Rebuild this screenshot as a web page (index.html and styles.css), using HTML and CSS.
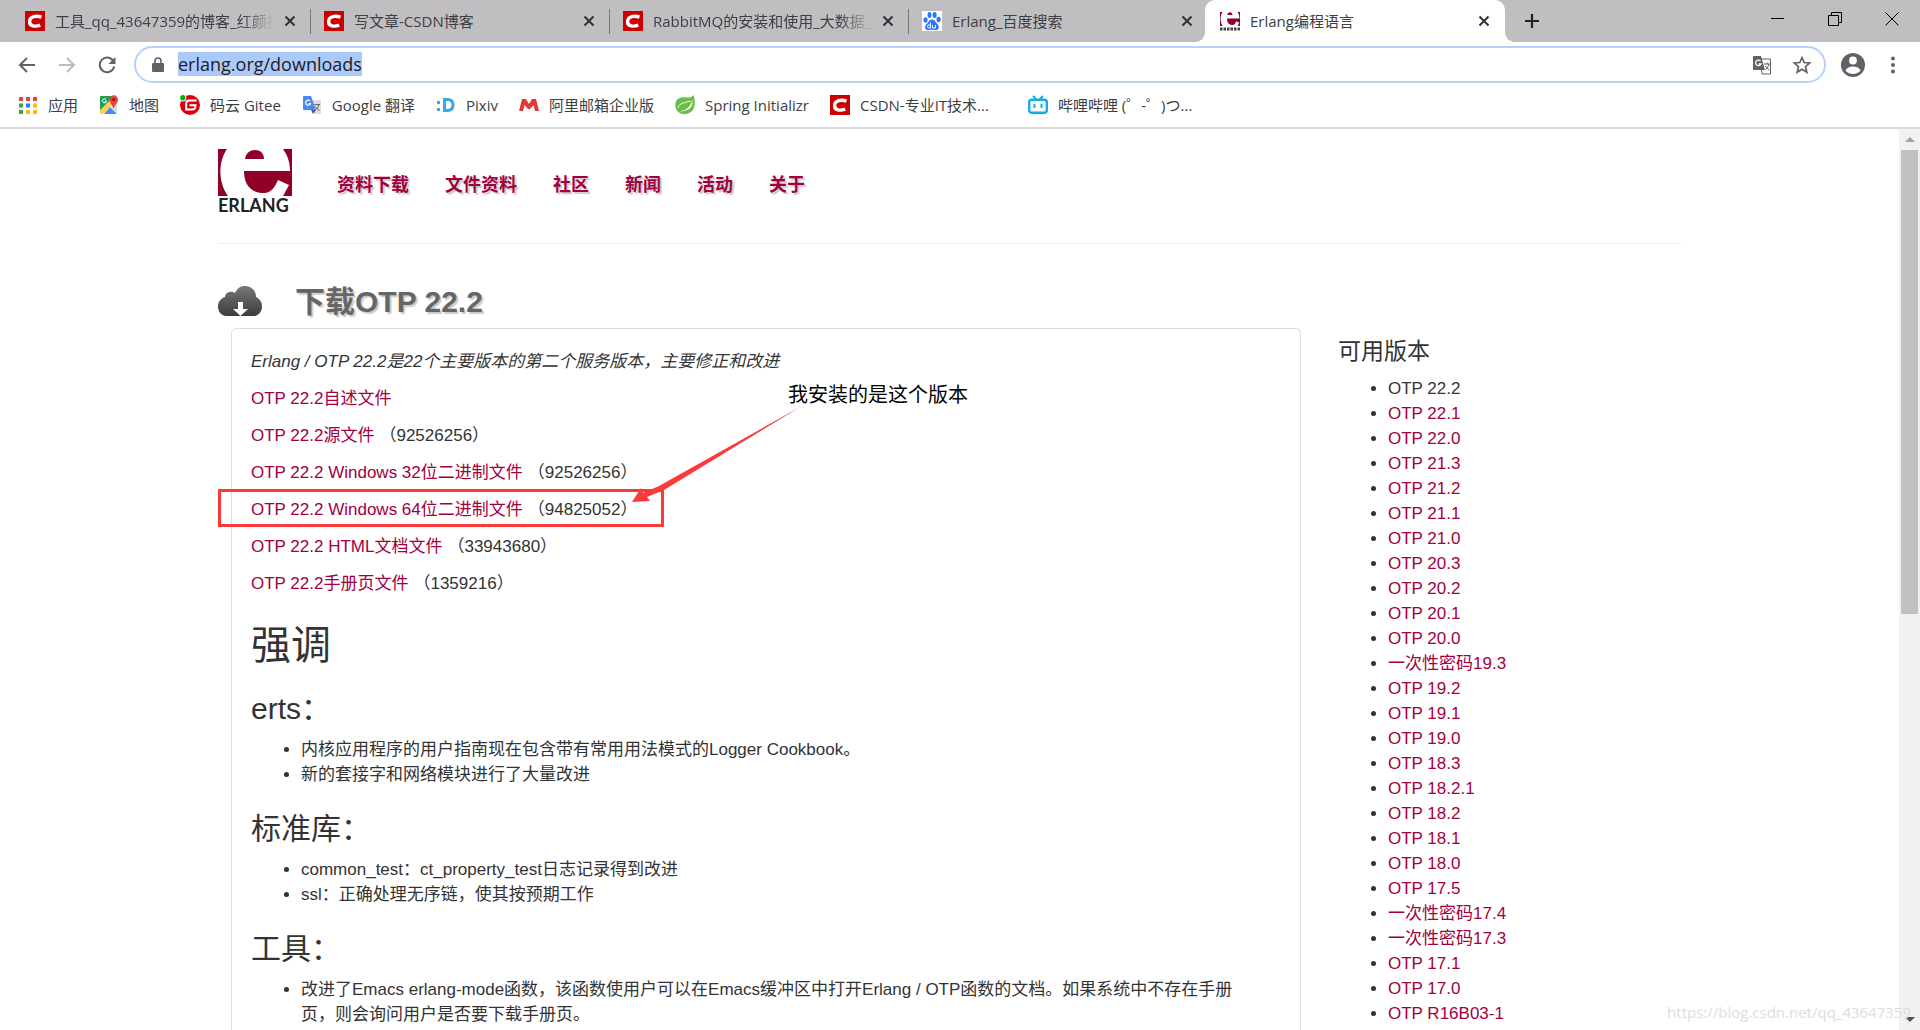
FILE: index.html
```html
<!DOCTYPE html>
<html lang="zh-CN">
<head>
<meta charset="utf-8">
<title>Erlang编程语言</title>
<link rel="stylesheet" href="styles.css">
</head>
<body>
<svg class="defs" aria-hidden="true">
  <symbol id="csdn" viewBox="0 0 20 20"><path fill="#c00" d="M0 0h20v20H0z"/><path fill="none" stroke="#fff" stroke-width="3.4" d="M16.5 6.2C12 4.600 4.800 4.800 4.600 10.500c-.2 4.800 5.800 5.500 10.600 3.600"/></symbol>
  <symbol id="erl" viewBox="0 0 74 47"><path fill="#900028" d="M0 0h9C0 13 0 33 10 47H0zM65 0h9v47H65l6-11-11-5c-3 7-7 13-14 13-13 0-20-8-20-22h46C72 14 70 7 65 0zM27 10c1-6 5-9 10-9s9 3 9 9z"/></symbol>
  <symbol id="close" viewBox="0 0 12 12"><path d="M1.500 1.500l9 9m0-9l-9 9" stroke="#303236" stroke-width="2" fill="none"/></symbol>
</svg>

<header class="browser">
  <div class="tabbar">
    <div class="tab"><svg class="fav"><use href="#csdn"/></svg><span class="tab-title fade">工具_qq_43647359的博客_红颜祸</span><button class="close" aria-label="关闭"><svg><use href="#close"/></svg></button></div>
    <div class="tab"><svg class="fav"><use href="#csdn"/></svg><span class="tab-title">写文章-CSDN博客</span><button class="close" aria-label="关闭"><svg><use href="#close"/></svg></button></div>
    <div class="tab"><svg class="fav"><use href="#csdn"/></svg><span class="tab-title fade">RabbitMQ的安装和使用_大数据_</span><button class="close" aria-label="关闭"><svg><use href="#close"/></svg></button></div>
    <div class="tab last"><svg class="fav" viewBox="0 0 20 20"><path fill="#fff" d="M0 0h20v20H0z"/><g fill="#2878ff"><ellipse cx="3.500" cy="9" rx="2.100" ry="2.700"/><ellipse cx="7.500" cy="4" rx="2" ry="2.900"/><ellipse cx="12.600" cy="4" rx="2" ry="2.900"/><ellipse cx="16.600" cy="8.500" rx="2.100" ry="2.700"/><path d="M10 8.500c3 0 3.500 3 5.500 4.800 2.500 2.300 1.300 6-1.700 5.900-1.500 0-2.200-.4-3.800-.4s-2.500.4-4 .4c-3 0-3.900-3.600-1.600-5.900C6.500 11.500 7 8.500 10 8.500z"/></g><path fill="none" stroke="#fff" d="M8.500 11.500v5.500H7a1.500 1.500 0 0 1 0-3h1.500M10.500 14v3h3v-3"/></svg><span class="tab-title">Erlang_百度搜索</span><button class="close" aria-label="关闭"><svg><use href="#close"/></svg></button></div>
    <div class="tab active"><svg class="fav" viewBox="0 0 20 20"><svg width="20" height="14" y="1" viewBox="0 0 74 47" preserveAspectRatio="none"><use href="#erl" width="74" height="47"/></svg><path stroke="#444" stroke-width="3" stroke-dasharray="2.500 1" d="M0 18h20"/></svg><span class="tab-title">Erlang编程语言</span><button class="close" aria-label="关闭"><svg><use href="#close"/></svg></button></div>
    <button class="newtab" aria-label="新标签页"><svg viewBox="0 0 16 16"><path d="M8 1v14M1 8h14" stroke="#222" stroke-width="2.200"/></svg></button>
    <div class="window-buttons">
      <button aria-label="最小化"><svg viewBox="0 0 14 14"><path d="M0 6.500h13" stroke="#000"/></svg></button>
      <button aria-label="还原"><svg viewBox="0 0 14 14"><path d="M.5 3.500h10v10H.5zM3.500 3V.5h10v10H11" stroke="#000" fill="none"/></svg></button>
      <button aria-label="关闭窗口"><svg viewBox="0 0 14 14"><path d="M.5.5l13 13m0-13l-13 13" stroke="#000"/></svg></button>
    </div>
  </div>
  <div class="toolbar">
    <button class="tool" aria-label="后退"><svg viewBox="0 0 18 18"><path d="M17 9H2m7-7L2 9l7 7" fill="none" stroke="#5f6368" stroke-width="2"/></svg></button>
    <button class="tool" aria-label="前进"><svg viewBox="0 0 18 18"><path d="M1 9h15M9 2l7 7-7 7" fill="none" stroke="#babcbe" stroke-width="2"/></svg></button>
    <button class="tool" aria-label="重新加载"><svg viewBox="0 0 18 18"><path d="M15.300 5A7.300 7.300 0 1 0 16.200 10.500" fill="none" stroke="#5f6368" stroke-width="2"/><path d="M17.500 1v7h-7z" fill="#5f6368"/></svg></button>
    <div class="omnibox">
      <svg class="lock" viewBox="0 0 12 16"><path d="M1 6h10q1 0 1 1v7q0 1-1 1H1q-1 0-1-1V7q0-1 1-1z" fill="#5f6368"/><path d="M3 7V4a3 3 0 0 1 6 0v3" fill="none" stroke="#5f6368" stroke-width="1.600"/></svg>
      <a class="url" href="#"><mark>erlang.org/downloads</mark></a>
      <button class="inner" aria-label="翻译此页"><svg viewBox="0 0 20 20"><path d="M8 4h10.500v15H10z" fill="#fff" stroke="#5f6368"/><path d="M2 1h7l4 14H2q-1 0-1-1V2q0-1 1-1z" fill="#5f6368"/><path d="M8.500 6A2.800 2.800 0 1 0 9 9H6.500" fill="none" stroke="#fff" stroke-width="1.300"/><path d="M12 9h6m-3-1.500V9m2 0q-1 4-3.500 5.500M13.500 11q1.500 3 4 4" fill="none" stroke="#5f6368"/></svg></button>
      <button class="inner" aria-label="收藏"><svg viewBox="0 0 20 20"><path d="M10 2.500l2.200 5 5.500.5-4.200 3.700 1.300 5.400-4.800-2.900-4.800 2.900 1.300-5.400L2.300 8l5.500-.5z" fill="none" stroke="#5f6368" stroke-width="1.700"/></svg></button>
    </div>
    <button class="tool profile" aria-label="用户"><svg viewBox="0 0 24 24"><circle cx="12" cy="12" r="12" fill="#5f6368"/><circle cx="12" cy="7.500" r="3.900" fill="#fff"/><path d="M4.500 17.500c2-5.500 13-5.500 15 0-3.500 4.600-11.500 4.600-15 0z" fill="#fff"/></svg></button>
    <button class="tool menu" aria-label="菜单"><svg viewBox="0 0 18 18"><g fill="#5f6368"><circle cx="9" cy="2.500" r="2"/><circle cx="9" cy="9" r="2"/><circle cx="9" cy="15.500" r="2"/></g></svg></button>
  </div>
  <nav class="bookmarks">
    <a href="#"><svg viewBox="0 0 20 20"><path fill="#e8453c" d="M1 2h4v4H1zM8 2h4v4H8zM15 2h4v4h-4z"/><path fill="#34a853" d="M1 8.500h4v4H1zM1 15h4v4H1z"/><path fill="#2e7cf6" d="M8 8.500h4v4H8z"/><path fill="#fbbc05" d="M15 8.500h4v4h-4zM8 15h4v4H8zM15 15h4v4h-4z"/></svg>应用</a>
    <a href="#"><svg viewBox="0 0 20 20"><path fill="#1e9e5a" d="M2 1h13L1 16V2q0-1 1-1z"/><path fill="#ffd04b" d="M1 15L14 3l3 3L4 19H2q-1 0-1-1z"/><path fill="#4a89f3" d="M5 19l6-7 7 7z"/><path fill="#d8d8d8" d="M11 11l4-4 3 4v7z"/><path fill="#e8453c" d="M14.500 14C14 10 10.500 9 10.500 4.500a4 4 0 0 1 8.500 0c0 4.500-4 5.500-4.500 9.500z"/><circle cx="14.700" cy="4.500" r="1.500" fill="#801c15"/><path d="M7 4.500A2 2 0 1 0 7.500 6H5.800" fill="none" stroke="#fff"/></svg>地图</a>
    <a href="#"><svg viewBox="0 0 20 20"><circle cx="10" cy="10" r="10" fill="#d9000f"/><circle cx="2.800" cy="2.800" r="3.600" fill="#fff"/><circle cx="2.800" cy="2.800" r="2.700" fill="#0aae12"/><path d="M16.500 5.500H9.500Q6.200 5.500 6.200 8.500v6h6q3.300 0 3.300-4.200H9.500" fill="none" stroke="#fff" stroke-width="2"/></svg>码云 Gitee</a>
    <a href="#"><svg viewBox="0 0 20 20"><path fill="#ddd" d="M8 5h10q1 0 1 1v12q0 1-1 1h-6z"/><path fill="#4a89f3" d="M2 1h7l5 14H2q-1 0-1-1V2q0-1 1-1z"/><path fill="#3059b8" d="M9 15h5l-3 4z"/><path d="M8 6A2.500 2.500 0 1 0 8.500 8.500H6.500" fill="none" stroke="#fff" stroke-width="1.200"/><path d="M12.500 9.500H18m-1 0q-1 4-3 5m-.5-3q1.500 3 4 4" fill="none" stroke="#666"/></svg>Google 翻译</a>
    <a href="#"><svg viewBox="0 0 20 20"><path fill="#35a8e8" d="M1 6h3v3H1zM1 13h3v3H1z"/><path fill="none" stroke="#35a8e8" stroke-width="3" d="M8.500 4.500h3q5.500 0 5.500 5.500t-5.500 5.500h-3z"/></svg>Pixiv</a>
    <a href="#"><svg viewBox="0 0 20 20"><path fill="#e03a34" d="M0 16L3 4h4l3 5 3-5h4l3 12h-4l-1.500-6L11 14H9L5.500 10 4 16z"/></svg>阿里邮箱企业版</a>
    <a href="#"><svg viewBox="0 0 20 20"><path fill="#68bd45" d="M18.500 0c3 9 1 18-7.500 19-5 .8-10-2-10.600-8C-.3 4 5 1.500 12 2.500c3 .2 5-.5 6.500-2.500z"/><path fill="#fff" d="M17.500 5c.5 8-4 11-13 11.500C12 15 15 12 17.500 5z"/><path d="M3 13C4 8 10 7.500 16 6" stroke="#fff" fill="none"/></svg>Spring Initializr</a>
    <a class="truncated" href="#"><svg><use href="#csdn"/></svg>CSDN-专业IT技术...</a>
    <a href="#"><svg viewBox="0 0 20 20"><path d="M5 1l3 3m7-3l-3 3" stroke="#12aee5" stroke-width="2"/><rect x="1.200" y="4.700" width="17.600" height="13" rx="2.500" fill="none" stroke="#12aee5" stroke-width="2.400"/><path d="M6.500 9v4m7-4v4" stroke="#12aee5" stroke-width="2"/></svg>哔哩哔哩 (゜-゜)つ...</a>
  </nav>
</header>

<div class="viewport">
  <div class="page">
    <div class="container">
      <header class="site-header">
        <a class="logo" href="#" aria-label="Erlang"><svg viewBox="0 0 74 47"><use href="#erl"/></svg><span>ERLANG</span></a>
        <nav class="site-nav"><a href="#">资料下载</a><a href="#">文件资料</a><a href="#">社区</a><a href="#">新闻</a><a href="#">活动</a><a href="#">关于</a></nav>
      </header>
      <div class="title-row">
        <svg class="cloud" viewBox="0 0 44 30"><defs><linearGradient id="cg" x2="0" y2="1"><stop stop-color="#777"/><stop offset="1" stop-color="#3c3c3c"/></linearGradient></defs><path fill="url(#cg)" d="M8 30C2 29 0 25 0 20c0-4 3-8 7-9 0-4 5-7 10-4C20 1 23 0 27 0c6 0 11 4 11 11 4 2 6 5 6 10 0 4-3 8-7 9z"/><path fill="#fff" d="M20 16h5v7h5l-7.500 7-7.500-7h5z"/></svg>
        <h2>下载OTP 22.2</h2>
      </div>
      <div class="columns">
        <main class="panel">
          <p><em>Erlang / OTP 22.2是22个主要版本的第二个服务版本，主要修正和改进</em></p>
          <p><a href="#">OTP 22.2自述文件</a></p>
          <p><a href="#">OTP 22.2源文件</a><span class="size">（92526256）</span></p>
          <p><a href="#">OTP 22.2 Windows 32位二进制文件</a><span class="size">（92526256）</span></p>
          <p class="marked"><a href="#">OTP 22.2 Windows 64位二进制文件</a><span class="size">（94825052）</span>
            <span class="frame"></span>
            <svg class="arrow" viewBox="0 0 170 98"><path fill="#fc3a3a" d="M169 1L28 80l-16 7-2-5L1 96l18-1-3-4 17-7z"/></svg>
            <span class="note">我安装的是这个版本</span></p>
          <p><a href="#">OTP 22.2 HTML文档文件</a><span class="size">（33943680）</span></p>
          <p><a href="#">OTP 22.2手册页文件</a><span class="size">（1359216）</span></p>
          <h1>强调</h1>
          <h3>erts：</h3>
          <ul><li>内核应用程序的用户指南现在包含带有常用用法模式的Logger Cookbook。</li><li>新的套接字和网络模块进行了大量改进</li></ul>
          <h3>标准库：</h3>
          <ul><li>common_test：ct_property_test日志记录得到改进</li><li>ssl：正确处理无序链，使其按预期工作</li></ul>
          <h3>工具：</h3>
          <ul><li>改进了Emacs erlang-mode函数，该函数使用户可以在Emacs缓冲区中打开Erlang / OTP函数的文档。如果系统中不存在手册<br>页，则会询问用户是否要下载手册页。</li></ul>
        </main>
        <aside class="versions">
          <h4>可用版本</h4>
          <ul>
            <li>OTP 22.2</li><li><a href="#">OTP 22.1</a></li><li><a href="#">OTP 22.0</a></li><li><a href="#">OTP 21.3</a></li><li><a href="#">OTP 21.2</a></li><li><a href="#">OTP 21.1</a></li><li><a href="#">OTP 21.0</a></li><li><a href="#">OTP 20.3</a></li><li><a href="#">OTP 20.2</a></li><li><a href="#">OTP 20.1</a></li><li><a href="#">OTP 20.0</a></li><li><a href="#">一次性密码19.3</a></li><li><a href="#">OTP 19.2</a></li><li><a href="#">OTP 19.1</a></li><li><a href="#">OTP 19.0</a></li><li><a href="#">OTP 18.3</a></li><li><a href="#">OTP 18.2.1</a></li><li><a href="#">OTP 18.2</a></li><li><a href="#">OTP 18.1</a></li><li><a href="#">OTP 18.0</a></li><li><a href="#">OTP 17.5</a></li><li><a href="#">一次性密码17.4</a></li><li><a href="#">一次性密码17.3</a></li><li><a href="#">OTP 17.1</a></li><li><a href="#">OTP 17.0</a></li><li><a href="#">OTP R16B03-1</a></li>
          </ul>
        </aside>
      </div>
    </div>
  </div>
  <div class="scrollbar"><svg viewBox="0 0 21 21"><path fill="#a3a3a3" d="M6 13l5-5 5 5z"/></svg><div class="track"><div class="thumb"></div></div><svg viewBox="0 0 21 21"><path fill="#505050" d="M6 8l5 5 5-5z"/></svg></div>
  <span class="watermark">https://blog.csdn.net/qq_43647359</span>
</div>
</body>
</html>
```

FILE: styles.css
```css
* { box-sizing: border-box; }
body {
  margin: 0;
  height: 100vh;
  display: flex;
  flex-direction: column;
  overflow: hidden;
  background: #fff;
  color: #333;
  font: 17px/25px "Liberation Sans", "Noto Sans CJK SC", sans-serif;
}
a { color: #a2003e; text-decoration: none; }
button { border: 0; padding: 0; background: none; display: flex; align-items: center; justify-content: center; }
.defs { display: none; }

/* Browser chrome */
.browser { border-bottom: 2px solid #dadce0; font-family: "Open Sans", "Noto Sans CJK SC", sans-serif; }
.tabbar { display: flex; height: 42px; padding-left: 12px; background: #c1bec1; }
.tab {
  position: relative;
  display: flex;
  align-items: center;
  width: 299px;
  padding: 0 15px 0 13px;
  font-size: 15px;
  color: #3c4043;
}
.tab:not(.active):not(.last)::after { content: ""; position: absolute; right: 0; top: 9px; width: 1px; height: 25px; background: #77757a; }
.fav { width: 20px; height: 20px; flex: none; }
.tab-title { flex: 1; margin: 0 10px; overflow: hidden; white-space: nowrap; }
.fade { -webkit-mask-image: linear-gradient(90deg, #000 85%, transparent); mask-image: linear-gradient(90deg, #000 85%, transparent); }
.close svg { width: 12px; height: 12px; }
.active { width: 300px; margin-left: -3px; padding-left: 15px; background: #fff; border-radius: 10px 10px 0 0; }
.active::before, .active::after { content: ""; position: absolute; bottom: 0; width: 10px; height: 10px; }
.active::before { left: -10px; background: radial-gradient(circle at 0 0, transparent 10px, #fff 10px); }
.active::after { right: -10px; background: radial-gradient(circle at 100% 0, transparent 10px, #fff 10px); }
.newtab { width: 54px; }
.newtab svg { width: 16px; height: 16px; }
.window-buttons { display: flex; margin-left: auto; height: 37px; }
.window-buttons button { width: 57px; }
.window-buttons svg { width: 14px; height: 14px; }

.toolbar { display: flex; align-items: center; height: 45px; padding: 0 7px; }
.tool { width: 40px; height: 40px; }
.tool svg { width: 18px; height: 18px; }
.omnibox {
  flex: 1;
  display: flex;
  align-items: center;
  height: 37px;
  margin: 0 7px;
  padding: 0 12px 0 16px;
  border: 2px solid #b5d3f9;
  border-radius: 19px;
}
.lock { width: 12px; height: 16px; margin-right: 14px; }
.url { flex: 1; font-size: 18px; color: #202124; }
.url mark { background: #accaf9; color: inherit; }
.inner { width: 40px; }
.inner:last-child { width: 20px; margin-left: 10px; }
.inner svg { width: 20px; height: 20px; }
.profile svg { width: 24px; height: 24px; }
.menu svg { width: 18px; height: 18px; }

.bookmarks { display: flex; align-items: center; gap: 21px; height: 40px; padding: 0 0 4px 18px; font-size: 15px; }
.bookmarks a { display: flex; align-items: center; gap: 10px; color: #3c4043; white-space: nowrap; }
.bookmarks .truncated { min-width: 177px; }
.bookmarks svg { width: 20px; height: 20px; flex: none; }

/* Page */
.viewport { position: relative; flex: 1; min-height: 0; display: flex; }
.page { flex: 1; min-width: 0; overflow: hidden; }
.container { max-width: 1463px; margin: 0 auto; }
.site-header { display: flex; height: 115px; padding-top: 20px; border-bottom: 1px solid #eee; }
.logo { display: flex; flex-direction: column; width: 74px; margin-right: 45px; font: bold 18px/18px Lato, sans-serif; color: #222; }
.logo svg { width: 74px; height: 47px; }
.site-nav { display: flex; gap: 36px; padding-top: 24px; font-size: 18px; font-weight: bold; }
.site-nav a, h2 { text-shadow: 2px 2px 1px #ccc; }
.title-row { display: flex; align-items: center; gap: 33px; height: 54px; margin-top: 30px; }
.cloud { width: 44px; height: 30px; }
h1, h2, h3, h4 { margin: 0; font-weight: normal; }
h2 { font-size: 30px; line-height: 33px; font-weight: bold; color: #666; }
h1 { font-size: 40px; line-height: 44px; margin: 27px 0 25px; }
h3 { font-size: 30px; line-height: 33px; margin: 25px 0 12px; }
h4 { font-size: 23px; line-height: 25px; margin: 0 0 12px; }
.columns { display: flex; gap: 37px; padding-left: 13px; }
.panel { flex: 1; padding: 20px 19px; border: 1px solid #ddd; border-radius: 5px; white-space: nowrap; }
.panel p { margin: 0 0 12px; }
.size { margin-left: 5px; }
ul { margin: 0; padding-left: 50px; }
.versions { width: 343px; padding-top: 11px; }

/* Annotation */
.marked { position: relative; }
.frame { position: absolute; left: -33px; top: -8px; width: 446px; height: 38px; border: 3px solid #fc3a3a; }
.arrow { position: absolute; left: 380px; top: -91px; width: 170px; height: 98px; }
.note { position: absolute; left: 537px; top: -114px; font-size: 20px; line-height: 25px; color: #000; }

.scrollbar { display: flex; flex-direction: column; width: 21px; background: #f1f1f1; }
.scrollbar svg { width: 21px; height: 21px; }
.track { flex: 1; padding: 0 2px; }
.thumb { height: 54%; background: #c1c1c1; }
.watermark { position: absolute; right: 9px; bottom: 5px; font-family: "Open Sans", sans-serif; font-size: 15px; color: #ddd; }
```
